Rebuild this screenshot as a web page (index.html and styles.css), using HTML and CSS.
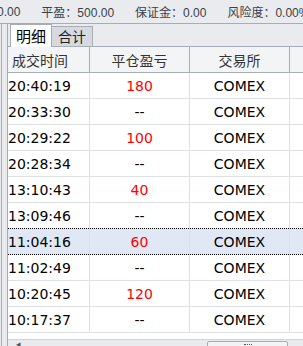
FILE: index.html
```html
<!DOCTYPE html>
<html lang="zh">
<head>
    <meta charset="UTF-8">
    <title>成交明细</title>
    <link rel="stylesheet" href="styles.css">
</head>
<body>
<div class="topbar">
    <span class="stat first">0.00</span>
    <span class="stat">平盈：500.00</span>
    <span class="stat">保证金：0.00</span>
    <span class="stat">风险度：0.00%</span>
</div>
<div class="main">
    <div class="side"></div>
    <div class="panel">
        <div class="tabs">
            <div class="tab active">明细</div>
            <div class="tab">合计</div>
        </div>
        <div class="grid">
            <div class="row head">
                <div class="cell left">成交时间</div>
                <div class="cell">平仓盈亏</div>
                <div class="cell">交易所</div>
                <div class="cell"></div>
            </div>
            <div class="row">
                <div class="cell time">20:40:19</div>
                <div class="cell red">180</div>
                <div class="cell">COMEX</div>
                <div class="cell"></div>
            </div>
            <div class="row">
                <div class="cell time">20:33:30</div>
                <div class="cell">--</div>
                <div class="cell">COMEX</div>
                <div class="cell"></div>
            </div>
            <div class="row">
                <div class="cell time">20:29:22</div>
                <div class="cell red">100</div>
                <div class="cell">COMEX</div>
                <div class="cell"></div>
            </div>
            <div class="row">
                <div class="cell time">20:28:34</div>
                <div class="cell">--</div>
                <div class="cell">COMEX</div>
                <div class="cell"></div>
            </div>
            <div class="row">
                <div class="cell time">13:10:43</div>
                <div class="cell red">40</div>
                <div class="cell">COMEX</div>
                <div class="cell"></div>
            </div>
            <div class="row">
                <div class="cell time">13:09:46</div>
                <div class="cell">--</div>
                <div class="cell">COMEX</div>
                <div class="cell"></div>
            </div>
            <div class="row selected">
                <div class="cell time">11:04:16</div>
                <div class="cell red">60</div>
                <div class="cell">COMEX</div>
                <div class="cell"></div>
            </div>
            <div class="row">
                <div class="cell time">11:02:49</div>
                <div class="cell">--</div>
                <div class="cell">COMEX</div>
                <div class="cell"></div>
            </div>
            <div class="row">
                <div class="cell time">10:20:45</div>
                <div class="cell red">120</div>
                <div class="cell">COMEX</div>
                <div class="cell"></div>
            </div>
            <div class="row">
                <div class="cell time">10:17:37</div>
                <div class="cell">--</div>
                <div class="cell">COMEX</div>
                <div class="cell"></div>
            </div>
        </div>
        <div class="filler"></div>
        <div class="hscroll">
            <span class="arrow">◂</span>
            <div class="thumb"><span class="grip"></span></div>
        </div>
    </div>
</div>
</body>
</html>
```

FILE: styles.css
```css
html, body {
    margin: 0;
    height: 100%;
    overflow: hidden;
}
body {
    background: #e9ebee;
    font-family: "DejaVu Sans", "Noto Sans CJK SC", sans-serif;
    color: #000;
}
.topbar {
    height: 23px;
    border-bottom: 1px solid #a7adb5;
    display: flex;
    align-items: center;
    white-space: nowrap;
    overflow: hidden;
    font-family: "Liberation Sans", "Noto Sans CJK SC", sans-serif;
    font-size: 12px;
    color: #3a3f4a;
}
.stat {
    margin-right: 21px;
    flex-shrink: 0;
}
.stat.first {
    margin-left: -3px;
}
.main {
    display: flex;
    height: 322px;
}
.side {
    width: 5px;
    margin-left: 1px;
    border-left: 1px solid #a7adb5;
}
.panel {
    flex: 1;
    border-left: 1px solid #a7adb5;
    display: flex;
    flex-direction: column;
    background: #fff;
}
.tabs {
    height: 23px;
    box-sizing: border-box;
    background: #e9ebee;
    border-bottom: 1px solid #a7adb5;
    display: flex;
    align-items: flex-end;
    padding-left: 2px;
}
.tab {
    font-family: "Noto Sans CJK SC", sans-serif;
    font-size: 14px;
    line-height: 19px;
    height: 19px;
    padding: 0 6px;
    border: 1px solid #a7adb5;
    border-bottom: none;
    background: #d6dae0;
    color: #222;
    margin-left: -1px;
    white-space: nowrap;
}
.tab.active {
    background: #fff;
    font-size: 15px;
    height: 22px;
    line-height: 22px;
    padding: 0 5px;
    margin-bottom: -1px;
    margin-left: 0;
    color: #000;
    position: relative;
    z-index: 1;
}
.grid {
    display: flex;
    flex-direction: column;
}
.row {
    display: grid;
    grid-template-columns: 82px 100px 100px 1fr;
    height: 26px;
    border-bottom: 1px solid #dde0e4;
    box-sizing: border-box;
}
.row.head {
    background: #f3f4f6;
    border-bottom-color: #a7adb5;
}
.cell {
    border-right: 1px solid #dde0e4;
    display: flex;
    align-items: center;
    justify-content: center;
    font-size: 14px;
    overflow: hidden;
    white-space: nowrap;
}
.row.head .cell {
    font-family: "Noto Sans CJK SC", sans-serif;
    font-size: 14px;
    color: #333;
    border-right-color: #a7adb5;
}
.row.head .cell.left {
    justify-content: flex-start;
    padding-left: 4px;
}
.cell:last-child {
    border-right: none;
}
.cell.time {
    justify-content: flex-start;
}
.cell.red {
    color: #ff0000;
}
.row.selected {
    background: #dfe8f4;
    border-top: 1px dotted #000;
    border-bottom: 1px dotted #000;
    margin-top: -1px;
    height: 27px;
}
.filler {
    flex: 1;
}
.hscroll {
    height: 6px;
    background: #e9ebee;
    border-top: 1px solid #d0d4d9;
    position: relative;
}
.arrow {
    position: absolute;
    left: 8px;
    top: 0;
    font-size: 9px;
    line-height: 8px;
    color: #555;
}
.thumb {
    position: absolute;
    left: 199px;
    top: 1px;
    width: 81px;
    height: 10px;
    border: 1px solid #a7adb5;
    border-radius: 2px;
    background: #f2f3f5;
    box-sizing: border-box;
}
.grip {
    display: block;
    width: 8px;
    margin: 2px auto 0;
    border-top: 1px dotted #555;
}
```
